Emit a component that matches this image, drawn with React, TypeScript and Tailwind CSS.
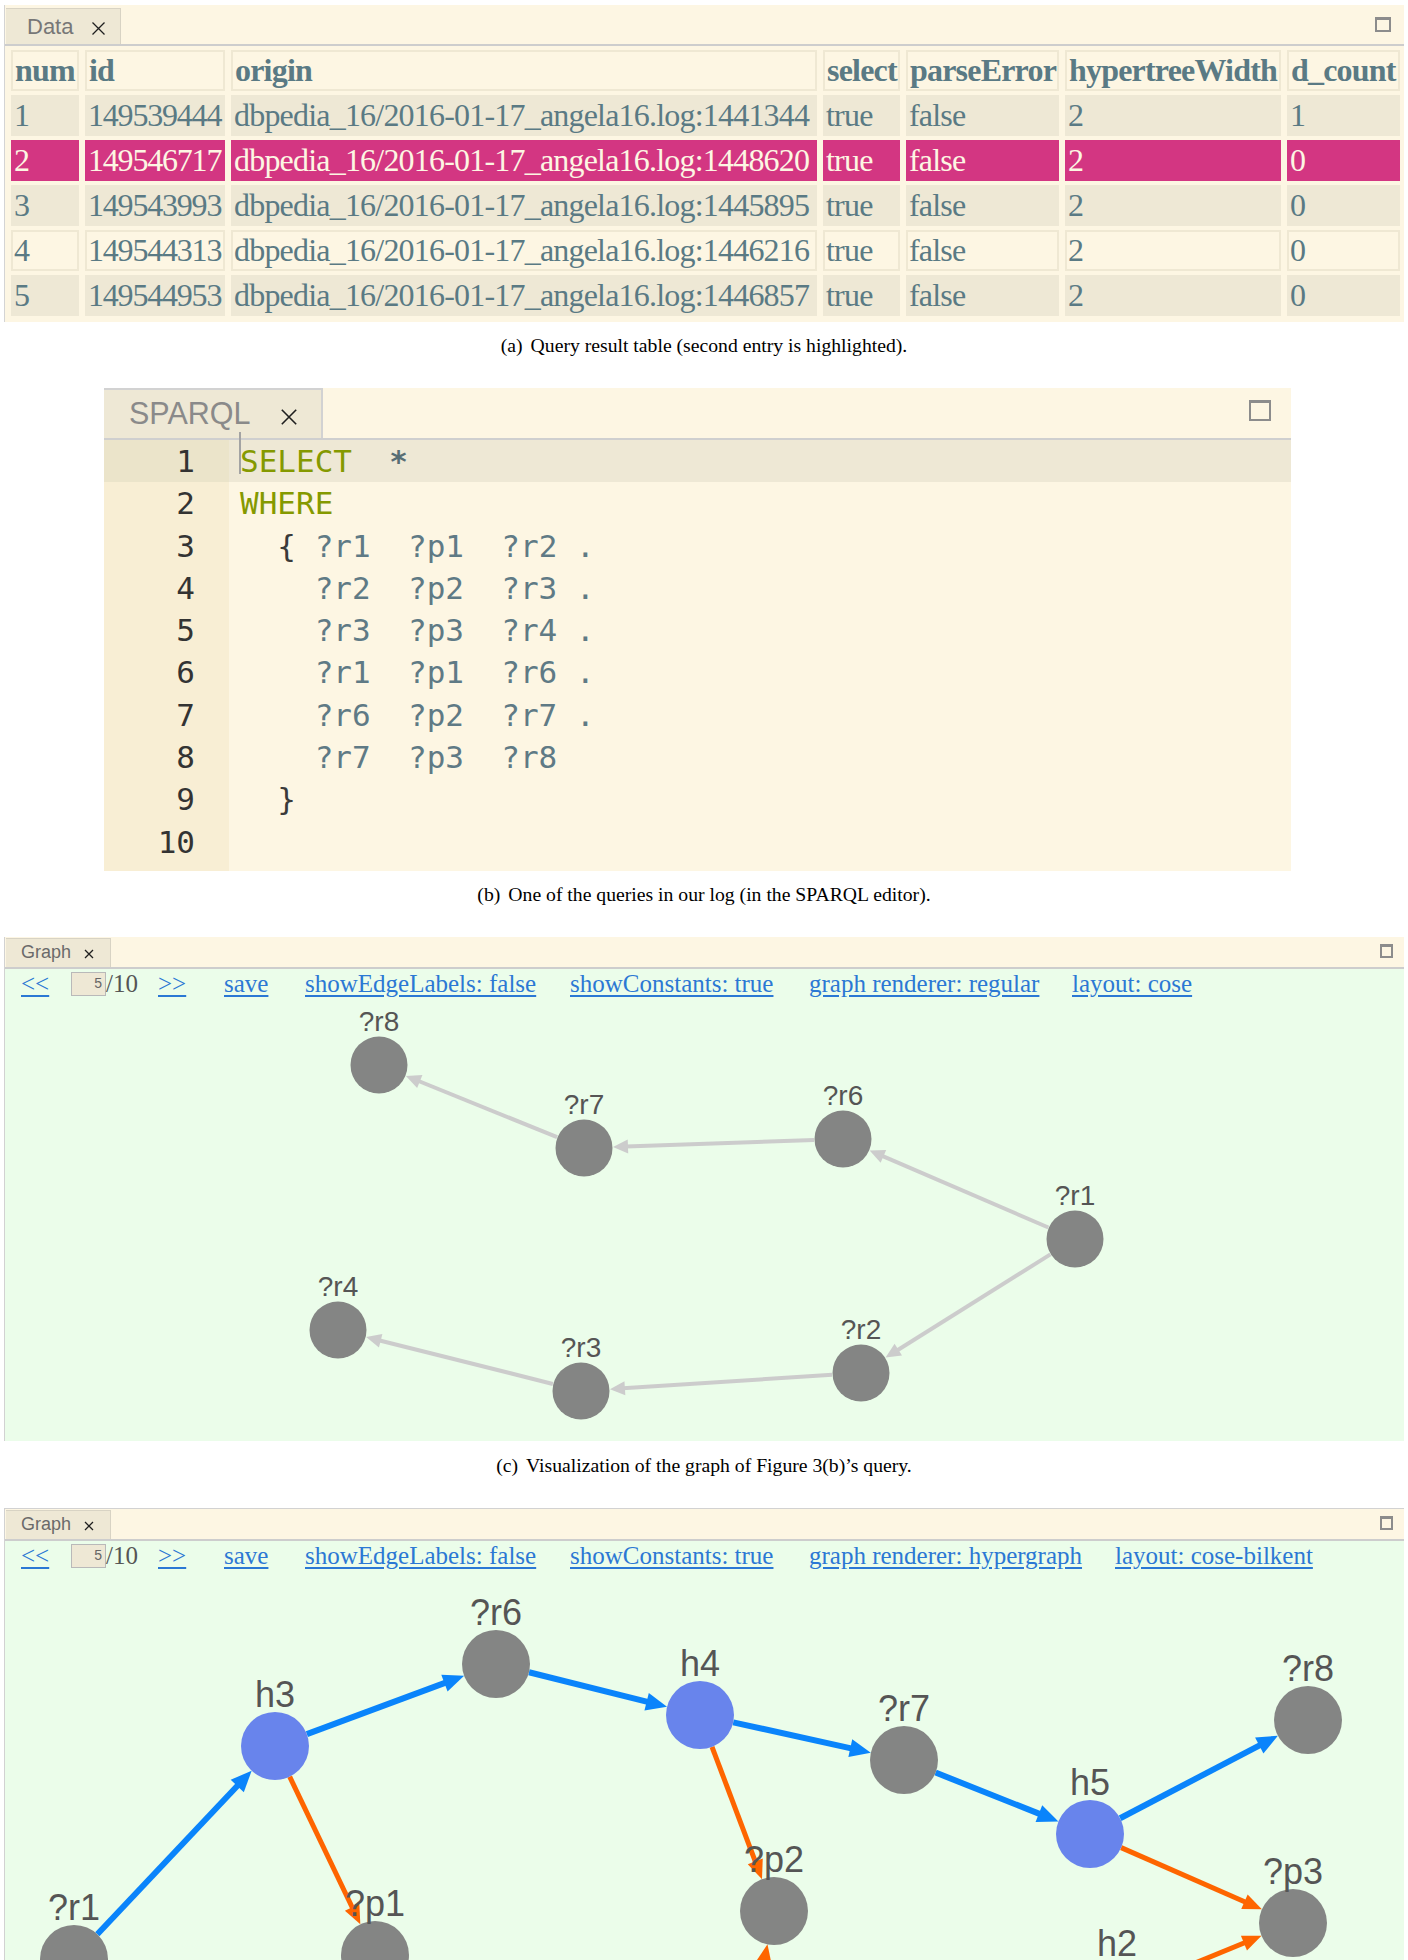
import React from 'react';

type Pt = [number, number];

const headers = ['num', 'id', 'origin', 'select', 'parseError', 'hypertreeWidth', 'd_count'];
const rows = [
  ['1', '149539444', 'dbpedia_16/2016-01-17_angela16.log:1441344', 'true', 'false', '2', '1'],
  ['2', '149546717', 'dbpedia_16/2016-01-17_angela16.log:1448620', 'true', 'false', '2', '0'],
  ['3', '149543993', 'dbpedia_16/2016-01-17_angela16.log:1445895', 'true', 'false', '2', '0'],
  ['4', '149544313', 'dbpedia_16/2016-01-17_angela16.log:1446216', 'true', 'false', '2', '0'],
  ['5', '149544953', 'dbpedia_16/2016-01-17_angela16.log:1446857', 'true', 'false', '2', '0'],
];

// how each row is painted: filled beige, highlighted, or only outlined
const rowKind = ['fill', 'hl', 'fill', 'line', 'fill'];

const code: { t: string; c?: string }[][] = [
  [{ t: 'SELECT', c: 'kw' }, { t: '  ' }, { t: '*', c: 'star' }],
  [{ t: 'WHERE', c: 'kw' }],
  [{ t: '  ' }, { t: '{', c: 'br' }, { t: ' ?r1  ?p1  ?r2 .' }],
  [{ t: '    ?r2  ?p2  ?r3 .' }],
  [{ t: '    ?r3  ?p3  ?r4 .' }],
  [{ t: '    ?r1  ?p1  ?r6 .' }],
  [{ t: '    ?r6  ?p2  ?r7 .' }],
  [{ t: '    ?r7  ?p3  ?r8' }],
  [{ t: '  ' }, { t: '}', c: 'br' }],
  [],
];

function Close({ size, stroke = 1.3 }: { size: number; stroke?: number }) {
  return (
    <svg width={size} height={size} viewBox="0 0 10 10" className="shrink-0">
      <path d="M1 1L9 9M9 1L1 9" stroke="#1f1f1f" strokeWidth={stroke} vectorEffect="non-scaling-stroke" fill="none" />
    </svg>
  );
}

function Edge({ a, b, ra, rb, color, w, al, aw }: { a: Pt; b: Pt; ra: number; rb: number; color: string; w: number; al: number; aw: number }) {
  const dx = b[0] - a[0];
  const dy = b[1] - a[1];
  const d = Math.hypot(dx, dy);
  const ux = dx / d;
  const uy = dy / d;
  const sx = a[0] + ux * ra;
  const sy = a[1] + uy * ra;
  const tx = b[0] - ux * rb;
  const ty = b[1] - uy * rb;
  const bx = tx - ux * al;
  const by = ty - uy * al;
  const px = -uy;
  const py = ux;
  return (
    <g>
      <line x1={sx} y1={sy} x2={bx + ux * 2} y2={by + uy * 2} stroke={color} strokeWidth={w} />
      <polygon points={`${tx},${ty} ${bx + px * aw},${by + py * aw} ${bx - px * aw},${by - py * aw}`} fill={color} />
    </g>
  );
}

function DataPanel() {
  return (
    <div className="ml-[4px] w-[1400px] border-l border-[#d4d4d4] bg-[#fdf6e3]">
      <div className="flex h-[41px] items-end justify-between border-b-2 border-[#cdcdcd]">
        <div className="ml-[1px] flex h-[36px] w-[115px] items-center border-t border-r border-[#d8d3c4] bg-[#eee8d5] pl-[21px] font-['Liberation_Sans',sans-serif] text-[22px] text-[#777]">
          <span>Data</span>
          <span className="ml-[18px] mt-[4px]"><Close size={15} /></span>
        </div>
        <div className="mb-[12px] mr-[13px] h-[15px] w-[16px] border-2 border-t-[3px] border-[#8c8c8c]" />
      </div>
      <div className="grid grid-cols-[68px_140px_586px_77px_153px_216px_113px] gap-x-[6px] gap-y-[4px] pb-[6px] pl-[6px] pt-[4px] font-['Liberation_Serif',serif] text-[32px] tracking-[-0.8px] text-[#5a7a84]">
        {headers.map((h) => (
          <div key={h} className="h-[41px] overflow-hidden whitespace-nowrap border-2 border-[#efe8d3] pl-[2px] font-bold leading-[37px]">
            {h}
          </div>
        ))}
        {rows.map((r, i) =>
          r.map((v, j) => {
            const k = rowKind[i];
            const cls =
              k === 'hl'
                ? 'bg-[#d33682] text-[#fdf6e3] leading-[41px] pl-[3px]'
                : k === 'fill'
                ? 'bg-[#eee8d5] leading-[41px] pl-[3px]'
                : 'border-2 border-[#efe8d3] leading-[37px] pl-[1px]';
            return (
              <div key={`${i}-${j}`} className={`h-[41px] overflow-hidden whitespace-nowrap ${cls} ${j === 1 ? 'tracking-[-1.2px]' : ''}`}>
                {v}
              </div>
            );
          })
        )}
      </div>
    </div>
  );
}

function SparqlPanel() {
  return (
    <div className="ml-[104px] w-[1187px] bg-[#fdf6e3]">
      <div className="flex h-[52px] items-stretch justify-between border-b-2 border-[#cfcfcf]">
        <div className="flex w-[219px] items-center border-t-2 border-r-2 border-[#d2d2d2] bg-[#eee8d5] pl-[25px] font-['Liberation_Sans',sans-serif] text-[30.5px] text-[#8a8a8a]">
          <span>SPARQL</span>
          <span className="ml-[30px] mt-[6px]"><Close size={18} stroke={1.6} /></span>
        </div>
        <div className="mr-[20px] mt-[12px] h-[21px] w-[22px] border-2 border-t-[3px] border-[#8c8c8c]" />
      </div>
      <div className="font-['DejaVu_Sans_Mono',monospace] text-[31px]">
        {code.map((line, i) => (
          <div key={i} className={`flex h-[42.3px] items-center ${i === 0 ? 'bg-[#eee8d5]' : ''}`}>
            <div className={`flex h-full w-[125px] shrink-0 items-center justify-end pr-[34px] text-[#333] ${i === 0 ? 'bg-[#ebe4ca]' : 'bg-[#f8eed4]'}`}>
              {i + 1}
            </div>
            <div className="relative pl-[11px] whitespace-pre text-[#5f7a85]">
              {i === 0 && <span className="absolute left-[10px] top-[-6px] h-[42px] w-[2px] bg-[#a3a3a3]" />}
              {line.map((s, k) => (
                <span
                  key={k}
                  className={
                    s.c === 'kw'
                      ? 'text-[#859900]'
                      : s.c === 'star'
                      ? 'font-bold text-[#586e75]'
                      : s.c === 'br'
                      ? 'text-[#3a3a3a]'
                      : ''
                  }
                >
                  {s.t}
                </span>
              ))}
            </div>
          </div>
        ))}
        <div className="flex h-[8px]">
          <div className="w-[125px] bg-[#f8eed4]" />
        </div>
      </div>
    </div>
  );
}

function Caption({ label, text, className }: { label: string; text: string; className: string }) {
  return (
    <div className={`flex h-[24px] items-center justify-center font-['Liberation_Serif',serif] text-[19.7px] text-black ${className}`}>
      <span className="mr-[8px]">{label}</span>
      <span>{text}</span>
    </div>
  );
}

const link = 'shrink-0 whitespace-nowrap text-[#2b78d4] underline underline-offset-[3px]';

function Toolbar({ renderer, layout }: { renderer: [string, number]; layout: [string, number, number] }) {
  return (
    <div className="flex h-[30px] items-center pl-[16px] font-['Liberation_Serif',serif] text-[25px]">
      <span className={`${link} w-[28px]`}>&lt;&lt;</span>
      <span className="ml-[22px] flex h-[24px] w-[35px] shrink-0 items-center justify-end border border-[#b9b9b9] bg-[#eee8d5] pr-[3px] font-['Liberation_Sans',sans-serif] text-[14px] text-[#666]">
        5
      </span>
      <span className="w-[32px] shrink-0 text-[#555]">/10</span>
      <span className={`${link} ml-[20px] w-[28px]`}>&gt;&gt;</span>
      <span className={`${link} ml-[38px] w-[42px]`}>save</span>
      <span className={`${link} ml-[39px] w-[229px]`}>showEdgeLabels: false</span>
      <span className={`${link} ml-[36px] w-[201px]`}>showConstants: true</span>
      <span className={`${link} ml-[38px]`} style={{ width: renderer[1] }}>
        {renderer[0]}
      </span>
      <span className={link} style={{ marginLeft: layout[1], width: layout[2] }}>
        {layout[0]}
      </span>
    </div>
  );
}

function GraphPanel({
  top,
  border,
  renderer,
  layout,
  y0,
  h,
  children,
}: {
  top: string;
  border: boolean;
  renderer: [string, number];
  layout: [string, number, number];
  y0: number;
  h: number;
  children: React.ReactNode;
}) {
  return (
    <div className={`${top} ml-[4px] w-[1400px] border-l border-[#d2d2d2] ${border ? 'border-t' : ''}`}>
      <div className="flex h-[32px] items-end justify-between border-b-2 border-[#cdcdcd] bg-[#fdf6e3]">
        <div className="ml-[1px] flex h-[29px] w-[105px] items-center border-t border-r border-[#d8d3c4] bg-[#eee8d5] pl-[15px] font-['Liberation_Sans',sans-serif] text-[18px] text-[#6a6a6a]">
          <span>Graph</span>
          <span className="ml-[13px] mt-[3px]"><Close size={10} /></span>
        </div>
        <div className="mb-[9px] mr-[11px] h-[14px] w-[13px] border-2 border-t-[3px] border-[#8c8c8c]" />
      </div>
      <div className="bg-[#ebfdea]">
        <Toolbar renderer={renderer} layout={layout} />
        <svg width={1399} height={h} viewBox={`5 ${y0} 1399 ${h}`} className="block font-['Liberation_Sans',sans-serif]">
          {children}
        </svg>
      </div>
    </div>
  );
}

const cNodes: Record<string, Pt> = {
  '?r8': [379, 1065],
  '?r7': [584, 1148],
  '?r6': [843, 1139],
  '?r1': [1075, 1239],
  '?r2': [861, 1373],
  '?r3': [581, 1391],
  '?r4': [338, 1330],
};
const cEdges: [string, string][] = [
  ['?r7', '?r8'],
  ['?r6', '?r7'],
  ['?r1', '?r6'],
  ['?r1', '?r2'],
  ['?r2', '?r3'],
  ['?r3', '?r4'],
];

const dNodes: Record<string, { p: Pt; hyper?: boolean }> = {
  '?r1': { p: [74, 1959] },
  h3: { p: [275, 1746], hyper: true },
  '?r6': { p: [496, 1664] },
  h4: { p: [700, 1715], hyper: true },
  '?r7': { p: [904, 1760] },
  h5: { p: [1090, 1834], hyper: true },
  '?r8': { p: [1308, 1720] },
  '?p1': { p: [375, 1955] },
  '?p2': { p: [774, 1911] },
  '?p3': { p: [1293, 1923] },
  h2: { p: [1117, 1995], hyper: true },
  h1: { p: [740, 2085], hyper: true },
};
const dBlue: [string, string][] = [
  ['?r1', 'h3'],
  ['h3', '?r6'],
  ['?r6', 'h4'],
  ['h4', '?r7'],
  ['?r7', 'h5'],
  ['h5', '?r8'],
];
const dOrange: [string, string][] = [
  ['h3', '?p1'],
  ['h4', '?p2'],
  ['h5', '?p3'],
  ['h2', '?p3'],
  ['h1', '?p2'],
];

export default function App() {
  return (
    <div className="h-[1960px] w-[1408px] overflow-hidden bg-white pt-[5px]">
      <DataPanel />
      <Caption label="(a)" text="Query result table (second entry is highlighted)." className="mt-[12px]" />
      <div className="mt-[30px]">
        <SparqlPanel />
      </div>
      <Caption label="(b)" text="One of the queries in our log (in the SPARQL editor)." className="mt-[12px]" />

      <GraphPanel top="mt-[30px]" border={false} renderer={['graph renderer: regular', 227]} layout={['layout: cose', 36, 119]} y0={999} h={442}>
        {cEdges.map(([a, b]) => (
          <Edge key={a + b} a={cNodes[a]} b={cNodes[b]} ra={29} rb={29} color="#cccccc" w={4} al={15} aw={7} />
        ))}
        {Object.entries(cNodes).map(([k, p]) => (
          <g key={k}>
            <circle cx={p[0]} cy={p[1]} r={28.5} fill="#848584" />
            <text x={p[0]} y={p[1] - 34} textAnchor="middle" fontSize={28} fill="#555">
              {k}
            </text>
          </g>
        ))}
      </GraphPanel>

      <Caption label="(c)" text="Visualization of the graph of Figure 3(b)’s query." className="mt-[13px]" />

      <GraphPanel
        top="mt-[30px]"
        border
        renderer={['graph renderer: hypergraph', 269]}
        layout={['layout: cose-bilkent', 37, 195]}
        y0={1571}
        h={390}
      >
        {dBlue.map(([a, b]) => (
          <Edge key={a + b} a={dNodes[a].p} b={dNodes[b].p} ra={34} rb={34} color="#0a84fb" w={6} al={21} aw={9} />
        ))}
        {dOrange.map(([a, b]) => (
          <Edge key={a + b} a={dNodes[a].p} b={dNodes[b].p} ra={34} rb={34} color="#fe6500" w={5} al={19} aw={8} />
        ))}
        {Object.entries(dNodes).map(([k, n]) => (
          <g key={k}>
            <circle cx={n.p[0]} cy={n.p[1]} r={34} fill={n.hyper ? '#6884ec' : '#848584'} />
            <text x={n.p[0]} y={n.p[1] - 39} textAnchor="middle" fontSize={36} fill="#555">
              {k}
            </text>
          </g>
        ))}
      </GraphPanel>
    </div>
  );
}
